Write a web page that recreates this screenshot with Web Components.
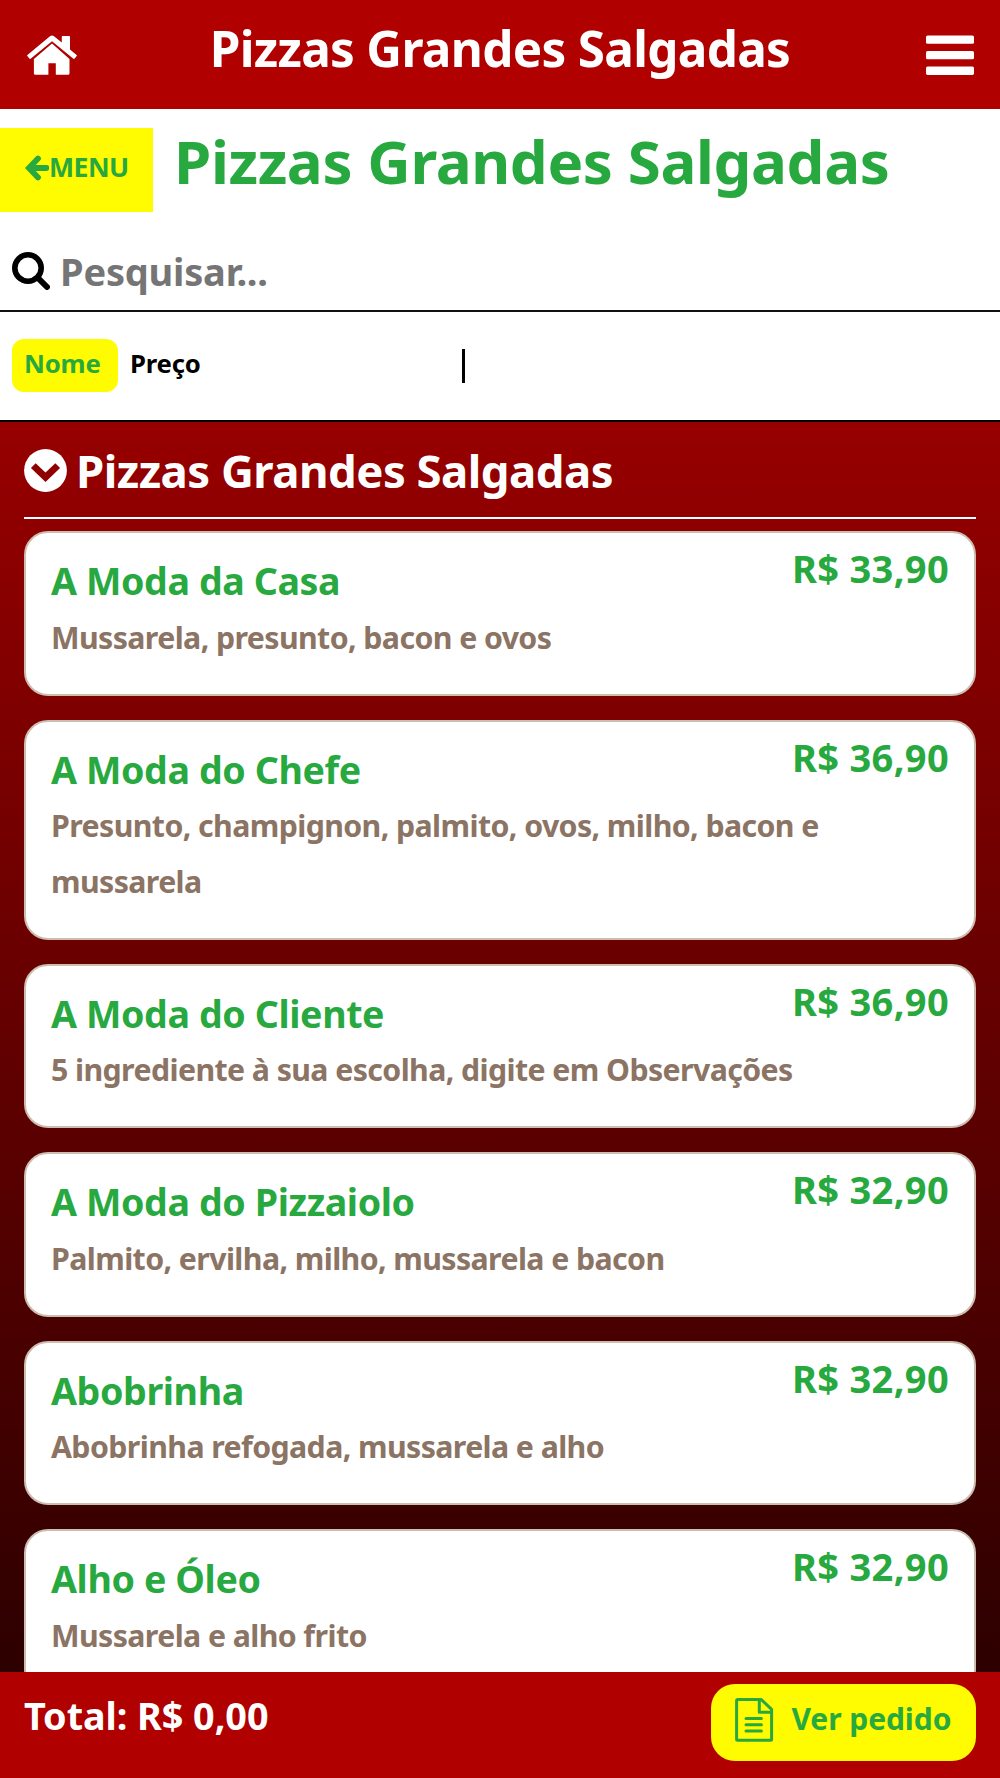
<!DOCTYPE html>
<html lang="pt-BR">
<head>
  <meta charset="UTF-8" />
  <meta name="viewport" content="width=device-width, initial-scale=1.0" />
  <title>Pizzas Grandes Salgadas</title>
  <style>
    html, body {
      margin: 0;
      padding: 0;
      background: #fff;
    }

    body {
      --red: #b00000;
      --yellow: #fffb00;
      --green: #28a93f;
      --brown: #8c7465;
      font-family: "Noto Sans", "Open Sans", sans-serif;
      font-weight: bold;
    }
  </style>
</head>
<body>
  <pizza-app>
    <app-header slot="header">Pizzas Grandes Salgadas</app-header>
    <page-title>Pizzas Grandes Salgadas</page-title>
    <search-bar>Pesquisar...</search-bar>
    <sort-bar>
      <sort-option active>Nome</sort-option>
      <sort-option>Preço</sort-option>
    </sort-bar>
    <menu-section>
      <span slot="title">Pizzas Grandes Salgadas</span>
      <menu-item name="A Moda da Casa" price="R$ 33,90">Mussarela, presunto, bacon e ovos</menu-item>
      <menu-item name="A Moda do Chefe" price="R$ 36,90">Presunto, champignon, palmito, ovos, milho, bacon e mussarela</menu-item>
      <menu-item name="A Moda do Cliente" price="R$ 36,90">5 ingrediente à sua escolha, digite em Observações</menu-item>
      <menu-item name="A Moda do Pizzaiolo" price="R$ 32,90">Palmito, ervilha, milho, mussarela e bacon</menu-item>
      <menu-item name="Abobrinha" price="R$ 32,90">Abobrinha refogada, mussarela e alho</menu-item>
      <menu-item name="Alho e Óleo" price="R$ 32,90">Mussarela e alho frito</menu-item>
    </menu-section>
    <order-bar slot="footer">Total: R$ 0,00</order-bar>
  </pizza-app>

  <script>
    // Registra um elemento cujo conteúdo é só um template
    function define(tag, html) {
      customElements.define(tag, class extends HTMLElement {
        constructor() {
          super();
          this.attachShadow({ mode: 'open' }).innerHTML = html;
        }
      });
    }

    define('pizza-app', `
      <style>
        :host {
          display: flex;
          flex-direction: column;
          height: 1778px;
          overflow: hidden;
        }
        main {
          flex: 1;
          min-height: 0;
          display: flex;
          flex-direction: column;
          overflow: hidden;
        }
      </style>
      <slot name="header"></slot>
      <main><slot></slot></main>
      <slot name="footer"></slot>
    `);

    define('app-header', `
      <style>
        :host {
          display: flex;
          justify-content: space-between;
          align-items: flex-start;
          flex: none;
          box-sizing: border-box;
          height: 108.6px;
          padding: 0 26px 0 27px;
          background: var(--red);
          color: #fff;
        }
        h1 {
          margin: 0 3px 0 0;
          font-size: 49.4px;
          line-height: 95px;
          letter-spacing: -0.68px;
        }
        svg { margin-top: 35px; }
      </style>
      <svg width="50" height="40" viewBox="0 0 50 40" fill="currentColor">
        <path d="M25 8.6 42.5 24v14.3a1.5 1.5 0 0 1-1.5 1.5H28.8V28.3h-7.4v11.5H8.4a1.5 1.5 0 0 1-1.5-1.5V24z"/>
        <path d="M23 1.2a3.2 3.2 0 0 1 4 0L34.8 7.6V1.7a.8.8 0 0 1 .8-.8h6.6a.8.8 0 0 1 .8.8v12.8l6.6 5.4a.9.9 0 0 1 .1 1.2l-2.1 2.5a.9.9 0 0 1-1.2.1L25 6.2 3.6 23.7a.9.9 0 0 1-1.2-.1L.3 21.1a.9.9 0 0 1 .1-1.2z"/>
      </svg>
      <h1><slot></slot></h1>
      <svg width="48" height="40" viewBox="0 0 48 40" fill="currentColor">
        <rect y=".5" width="48" height="8.3" rx="1.6"/>
        <rect y="16" width="48" height="8.3" rx="1.6"/>
        <rect y="31.6" width="48" height="8.3" rx="1.6"/>
      </svg>
    `);

    define('page-title', `
      <style>
        :host {
          display: flex;
          align-items: flex-start;
          flex: none;
          gap: 21px;
          padding-top: 19.4px;
          color: var(--green);
        }
        .back {
          display: flex;
          align-items: center;
          box-sizing: border-box;
          width: 153px;
          height: 84px;
          padding: 0 0 6px 25px;
          background: var(--yellow);
          font-size: 26.6px;
          letter-spacing: -0.5px;
          line-height: 36px;
        }
        .back svg { margin-top: 2px; }
        h2 {
          margin: 0;
          font-size: 60px;
          line-height: 67px;
          letter-spacing: -0.38px;
        }
      </style>
      <div class="back">
        <svg width="24" height="26" viewBox="0 0 24 26" fill="none" stroke="currentColor" stroke-width="5.8" stroke-linecap="round" stroke-linejoin="miter">
          <path d="M13 3.6 4 13l9 9.4M5.5 13h16"/>
        </svg>
        <span>MENU</span>
      </div>
      <h2><slot></slot></h2>
    `);

    define('search-bar', `
      <style>
        :host {
          display: flex;
          align-items: center;
          flex: none;
          gap: 10px;
          height: 78px;
          margin-top: 20px;
          padding-left: 12px;
          border-bottom: 2px solid #111;
          font-size: 38px;
          line-height: 52px;
          letter-spacing: -0.2px;
          color: #757575;
        }
      </style>
      <svg width="38" height="38" viewBox="0 0 38 38" fill="none" stroke="#000">
        <circle cx="16" cy="16" r="13.2" stroke-width="5.6"/>
        <path d="M26 26l9 9" stroke-width="6" stroke-linecap="round"/>
      </svg>
      <slot></slot>
    `);

    define('sort-bar', `
      <style>
        :host {
          display: flex;
          align-items: center;
          flex: none;
          height: 107.6px;
          padding-left: 12px;
          border-bottom: 2.5px solid #000;
        }
        .options {
          display: flex;
          width: 450px;
        }
        .divider {
          width: 2.6px;
          height: 34px;
          margin-top: 1px;
          background: #000;
        }
      </style>
      <div class="options"><slot></slot></div>
      <div class="divider"></div>
    `);

    define('sort-option', `
      <style>
        :host {
          display: block;
          box-sizing: border-box;
          height: 53px;
          padding: 0 17.5px 0 12px;
          border-radius: 12px;
          font-size: 25.7px;
          line-height: 49px;
          letter-spacing: -0.2px;
        }
        :host([active]) {
          background: var(--yellow);
          color: var(--green);
        }
      </style>
      <slot></slot>
    `);

    define('menu-section', `
      <style>
        :host {
          display: block;
          flex: none;
          padding: 0 24px;
          background: linear-gradient(#970000, #2d0000 1250px, #200000);
        }
        header {
          display: flex;
          align-items: center;
          gap: 9px;
          box-sizing: border-box;
          height: 97px;
          padding-top: 2px;
          border-bottom: 2px solid #fff;
          color: #fff;
          font-size: 45.5px;
          line-height: 62px;
          letter-spacing: -0.53px;
        }
        .items {
          display: flex;
          flex-direction: column;
          gap: 24px;
          padding: 12.6px 0 24px;
        }
      </style>
      <header>
        <svg width="43" height="43" viewBox="0 0 43 43">
          <circle cx="21.5" cy="21.5" r="21.4" fill="#fff"/>
          <path d="M9.3 16.6 21.5 28.3 33.7 16.6" fill="none" stroke="#900000" stroke-width="6.8"/>
        </svg>
        <slot name="title"></slot>
      </header>
      <div class="items"><slot></slot></div>
    `);

    define('order-bar', `
      <style>
        :host {
          display: flex;
          justify-content: space-between;
          align-items: flex-start;
          flex: none;
          box-sizing: border-box;
          height: 106.4px;
          padding: 12px 24px 0;
          background: var(--red);
          color: #fff;
          font-size: 37.8px;
          line-height: 63px;
          letter-spacing: -0.07px;
        }
        .order {
          display: flex;
          align-items: center;
          gap: 17.5px;
          box-sizing: border-box;
          width: 265px;
          height: 77.4px;
          padding: 0 0 0 24px;
          border-radius: 24px;
          background: var(--yellow);
          color: var(--green);
          font-size: 30px;
        }
        .order svg { margin-bottom: 5px; }
        .order span { margin-bottom: 7px; }
      </style>
      <span><slot></slot></span>
      <div class="order">
        <svg width="39" height="44" viewBox="0 0 39 44" fill="none" stroke="currentColor" stroke-width="3">
          <path d="M2.6 1.6H26.3L36.6 11.4V41.2a1 1 0 0 1-1 1H2.6a1 1 0 0 1-1-1V2.6a1 1 0 0 1 1-1zM24.3 2v12.3h12.3" stroke-linejoin="round"/>
          <path d="M11 20.6h15.4M11 26.8h15.4M11 33h15.4" stroke-linecap="round"/>
        </svg>
        <span>Ver pedido</span>
      </div>
    `);

    class MenuItem extends HTMLElement {
      constructor() {
        super();

        const shadow = this.attachShadow({ mode: 'open' });
        shadow.innerHTML = `
          <style>
            :host {
              display: block;
              box-sizing: border-box;
              padding: 19px 25px 28px;
              border: 2px solid #cdbdb0;
              border-radius: 24px;
              background: #fff;
              color: var(--green);
            }
            .top {
              display: flex;
              justify-content: space-between;
              align-items: flex-start;
            }
            h3 {
              margin: 0;
              font-size: 37.6px;
              line-height: 57.6px;
              letter-spacing: -0.4px;
            }
            .price {
              font-size: 38px;
              line-height: 33px;
              letter-spacing: 0.35px;
            }
            p {
              margin: 0;
              color: var(--brown);
              font-size: 30.3px;
              line-height: 55.8px;
              letter-spacing: -0.6px;
            }
          </style>
          <div class="top">
            <h3></h3>
            <span class="price"></span>
          </div>
          <p><slot></slot></p>
        `;

        this.nameEl = shadow.querySelector('h3');
        this.priceEl = shadow.querySelector('.price');
      }

      connectedCallback() {
        this.nameEl.textContent = this.getAttribute('name');
        this.priceEl.textContent = this.getAttribute('price');
      }
    }

    customElements.define('menu-item', MenuItem);
  </script>
</body>
</html>
